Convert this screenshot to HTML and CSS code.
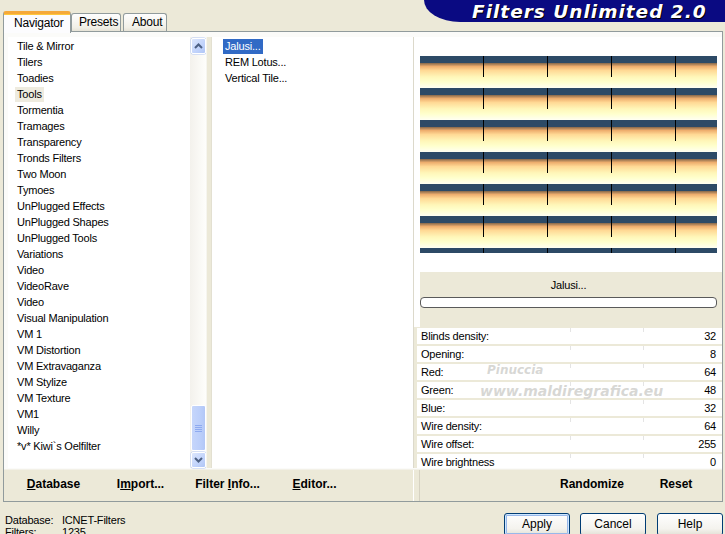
FILE: index.html
```html
<!DOCTYPE html>
<html>
<head>
<meta charset="utf-8">
<link rel="stylesheet" href="styles.css">
</head>
<body>
<div class="app">
  <div class="top">
    <div class="tabs">
      <div class="tab active">Navigator</div>
      <div class="tab t-presets">Presets</div>
      <div class="tab t-about">About</div>
    </div>
    <div class="logo">Filters Unlimited 2.0</div>
  </div>
  <div class="panel">
    <div class="main">
      <div class="list1">
        <div class="items">
          <div class="it"><span>Tile &amp; Mirror</span></div>
          <div class="it"><span>Tilers</span></div>
          <div class="it"><span>Toadies</span></div>
          <div class="it"><span class="sel-grey">Tools</span></div>
          <div class="it"><span>Tormentia</span></div>
          <div class="it"><span>Tramages</span></div>
          <div class="it"><span>Transparency</span></div>
          <div class="it"><span>Tronds Filters</span></div>
          <div class="it"><span>Two Moon</span></div>
          <div class="it"><span>Tymoes</span></div>
          <div class="it"><span>UnPlugged Effects</span></div>
          <div class="it"><span>UnPlugged Shapes</span></div>
          <div class="it"><span>UnPlugged Tools</span></div>
          <div class="it"><span>Variations</span></div>
          <div class="it"><span>Video</span></div>
          <div class="it"><span>VideoRave</span></div>
          <div class="it"><span>Video</span></div>
          <div class="it"><span>Visual Manipulation</span></div>
          <div class="it"><span>VM 1</span></div>
          <div class="it"><span>VM Distortion</span></div>
          <div class="it"><span>VM Extravaganza</span></div>
          <div class="it"><span>VM Stylize</span></div>
          <div class="it"><span>VM Texture</span></div>
          <div class="it"><span>VM1</span></div>
          <div class="it"><span>Willy</span></div>
          <div class="it"><span>*v* Kiwi`s Oelfilter</span></div>
        </div>
        <div class="scroll">
          <div class="sbtn">
            <svg width="9" height="6" viewBox="0 0 9 6"><path d="M1 5 L4.5 1.5 L8 5" fill="none" stroke="#4d6185" stroke-width="2"/></svg>
          </div>
          <div class="track"></div>
          <div class="thumb">
            <svg width="7" height="8" viewBox="0 0 7 8"><path d="M0 1.5H7M0 3.5H7M0 5.5H7M0 7.5H7" stroke="#8eaaf0" stroke-width="1"/></svg>
          </div>
          <div class="sbtn">
            <svg width="9" height="6" viewBox="0 0 9 6"><path d="M1 1 L4.5 4.5 L8 1" fill="none" stroke="#4d6185" stroke-width="2"/></svg>
          </div>
        </div>
      </div>
      <div class="split"></div>
      <div class="list2">
        <div class="it"><span class="sel-blue">Jalusi...</span></div>
        <div class="it"><span>REM Lotus...</span></div>
        <div class="it"><span>Vertical Tile...</span></div>
      </div>
      <div class="split2"></div>
      <div class="right">
        <div class="preview">
          <svg width="297" height="197" viewBox="0 0 297 197">
            <defs>
              <linearGradient id="g" x1="0" y1="0" x2="0" y2="1">
                <stop offset="0" stop-color="#85674a"/>
                <stop offset="0.14" stop-color="#eeae6e"/>
                <stop offset="0.3" stop-color="#ffd995"/>
                <stop offset="0.55" stop-color="#fff6b8"/>
                <stop offset="0.75" stop-color="#ffffcc"/>
                <stop offset="1" stop-color="#fffff2"/>
              </linearGradient>
              <pattern id="p" x="0" y="0" width="64" height="32" patternUnits="userSpaceOnUse">
                <rect x="0" y="0" width="64" height="7" fill="#2d4a66"/>
                <rect x="0" y="7" width="64" height="25" fill="url(#g)"/>
                <rect x="63" y="0" width="1.3" height="21" fill="#000"/>
              </pattern>
            </defs>
            <rect x="0" y="0" width="297" height="197" fill="url(#p)"/>
          </svg>
        </div>
        <div class="info">
          <div class="fname">Jalusi...</div>
          <div class="progress"></div>
        </div>
        <div class="params">
          <div class="row"><span>Blinds density:</span><span>32</span></div>
          <div class="row"><span>Opening:</span><span>8</span></div>
          <div class="row"><span>Red:</span><span>64</span></div>
          <div class="row"><span>Green:</span><span>48</span></div>
          <div class="row"><span>Blue:</span><span>32</span></div>
          <div class="row"><span>Wire density:</span><span>64</span></div>
          <div class="row"><span>Wire offset:</span><span>255</span></div>
          <div class="row"><span>Wire brightness</span><span>0</span></div>
          <div class="wm wm1">Pinuccia</div>
          <div class="wm wm2">www.maldiregrafica.eu</div>
        </div>
      </div>
    </div>
    <div class="bar">
      <div class="bar-left">
        <div class="bb"><u>D</u>atabase</div>
        <div class="bb">I<u>m</u>port...</div>
        <div class="bb">Filter <u>I</u>nfo...</div>
        <div class="bb"><u>E</u>ditor...</div>
      </div>
      <div class="bar-sep"></div>
      <div class="bar-right">
        <div class="bb2">Randomize</div>
        <div class="bb2">Reset</div>
      </div>
    </div>
  </div>
  <div class="foot">
    <div class="status">
      <div class="srow"><span class="sk">Database:</span><span>ICNET-Filters</span></div>
      <div class="srow"><span class="sk">Filters:</span><span>1235</span></div>
    </div>
    <div class="btns">
      <div class="btn default">Apply</div>
      <div class="btn b-cancel">Cancel</div>
      <div class="btn b-help">Help</div>
    </div>
  </div>
</div>
</body>
</html>
```

FILE: styles.css
```css
* { box-sizing: border-box; }
html, body { margin: 0; padding: 0; }
body {
  width: 725px;
  height: 534px;
  overflow: hidden;
  background: #ece9d8;
  font-family: "Liberation Sans", Arial, sans-serif;
  font-size: 11px;
  letter-spacing: -0.2px;
  color: #000;
}
.app { width: 725px; height: 534px; position: relative; }

/* top strip */
.top { height: 31px; display: flex; justify-content: space-between; align-items: flex-start; position: relative; z-index: 2; }
.tabs { display: flex; align-items: flex-end; padding-left: 3px; height: 32px; }
.tab {
  height: 18px;
  border: 1px solid #919b9c;
  border-bottom: none;
  border-radius: 3px 3px 0 0;
  background: linear-gradient(#fefefe, #f1efe6 80%, #e6e3d6);
  padding: 0 7px;
  line-height: 17px;
  margin-bottom: 1px;
  font-size: 12px;
}
.tab.active {
  height: 22px;
  width: 68px;
  background: #fcfcfe;
  border-top: 3px solid #f5a93a;
  box-shadow: inset 0 1px 0 #ffc83c;
  padding-left: 10px;
  line-height: 18px;
  margin-bottom: -1px;
  font-size: 12px;
}
.t-presets { width: 50px; padding-left: 7px; margin-left: 0; }
.t-about { width: 44px; padding-left: 8px; margin-left: 2px; }
.logo {
  width: 301px;
  height: 22px;
  background: #0a0a82;
  border-bottom-left-radius: 36px 22px;
  color: #fff;
  font-family: "DejaVu Sans", sans-serif;
  font-weight: bold;
  font-style: italic;
  font-size: 18.5px;
  letter-spacing: 1px;
  line-height: 24px;
  padding-left: 48px;
  white-space: nowrap;
  overflow: hidden;
  text-shadow: 1px 1px 0 #000;
}

/* panel */
.panel {
  margin-left: 3px;
  width: 720px;
  height: 471px;
  border: 1px solid #919b9c;
  background: #fbfbf9;
  display: flex;
  flex-direction: column;
}
.main { height: 437px; display: flex; padding: 5px 0 0 4px; }
.list1 { width: 198px; height: 431px; background: #fff; display: flex; }
.items { flex: 1; padding: 1px 0 0 9px; }
.it { height: 16px; line-height: 16px; white-space: nowrap; }
.it span { padding: 0 2px; margin-left: -2px; display: inline-block; line-height: 15px; height: 15px; }
.sel-grey { background: #eeebdf; }
.sel-blue { background: #316ac5; color: #fff; }

.scroll { width: 16px; display: flex; flex-direction: column; background: linear-gradient(90deg, #f3f1ec, #fefefb); padding-top: 1px; }
.sbtn {
  width: 15px; height: 16px; margin-left: 1px;
  border: 1px solid #fff;
  border-radius: 2px;
  background: linear-gradient(135deg, #dce6fc, #c1d3fb 60%, #b0c6f6);
  box-shadow: 0 0 0 0.5px #b4c8f6;
  display: flex; align-items: center; justify-content: center;
}
.track { flex: 1; }
.thumb {
  width: 15px; height: 46px; margin-left: 1px;
  border: 1px solid #fff;
  border-radius: 2px;
  background: linear-gradient(90deg, #c6d6fb, #bccffa 60%, #b2c7f7);
  display: flex; align-items: center; justify-content: center;
  margin-bottom: 1px;
}

.split { width: 6px; height: 431px; background: #ece9d8; border-left: 1px solid #f6f5ef; border-right: 1px solid #e3e0d1; }
.list2 { width: 201px; height: 431px; background: #fff; padding: 1px 0 0 13px; }
.split2 { width: 1px; height: 431px; background: #dcd9cb; }

.right { width: 308px; height: 431px; background: #fff; display: flex; flex-direction: column; overflow: hidden; }
.preview { height: 235px; flex: none; padding: 19px 0 0 6px; }
.preview svg { display: block; }
.info { height: 55px; flex: none; margin-left: 6px; background: #ece9d8; padding-top: 4px; }
.fname { height: 18px; line-height: 18px; text-align: center; width: 297px; }
.progress { width: 297px; height: 11px; margin-top: 3px; border: 1px solid #5a5a5a; border-radius: 4px; background: #fff; }

.params { flex: 1; background: #ece9d8; padding: 1px 0 0 3px; position: relative; }
.row {
  height: 16px; margin-bottom: 2px;
  background: #fff;
  display: flex; justify-content: space-between;
  line-height: 16px;
  padding: 0 6px 0 4px;
  background-image: linear-gradient(#e4e4e4, #e4e4e4), linear-gradient(#e4e4e4, #e4e4e4);
  background-size: 1px 4px, 1px 4px;
  background-position: 153px 0, 226px 0;
  background-repeat: no-repeat;
}
.wm {
  position: absolute;
  color: rgba(175,175,170,0.5);
  font-family: "DejaVu Sans", sans-serif;
  font-weight: bold;
  font-style: italic;
  text-shadow: 0 0 1px #fff;
  letter-spacing: 0;
}
.wm1 { left: 73px; top: 36px; font-size: 12px; }
.wm2 { left: 66px; top: 56px; font-size: 14px; }

/* bottom bar */
.bar { height: 32px; display: flex; background: #ece9d8; border-top: 1px solid #f3f1e8; }
.bar-left { width: 409px; display: flex; padding-left: 6px; }
.bar-sep { width: 7px; border-left: 1px solid #fff; border-right: 1px solid #d6d2c2; }
.bar-right { flex: 1; display: flex; justify-content: flex-end; padding-right: 4px; }
.bb, .bb2 {
  font-weight: bold; font-size: 12px; letter-spacing: 0;
  line-height: 28px; text-align: center;
}
.bb { width: 87px; }
.bb2 { width: 84px; }

/* footer */
.foot { display: flex; justify-content: space-between; padding-top: 11px; }
.status { padding-left: 5px; padding-top: 1px; }
.srow { height: 12px; line-height: 12px; display: flex; }
.sk { width: 57px; }
.btns { display: flex; padding-right: 2px; }
.btn {
  width: 66px; height: 23px;
  border: 1px solid #003c74;
  border-radius: 3px;
  background: linear-gradient(#fefefe, #f4f3ee 70%, #e3e1d6);
  text-align: center;
  line-height: 21px;
  font-size: 12px;
  letter-spacing: 0;
}
.b-cancel { margin-left: 10px; }
.b-help { margin-left: 11px; }
.btn.default { box-shadow: inset 0 0 0 1px #cee7ff, inset 0 0 0 2px #98b8ea; }
```
